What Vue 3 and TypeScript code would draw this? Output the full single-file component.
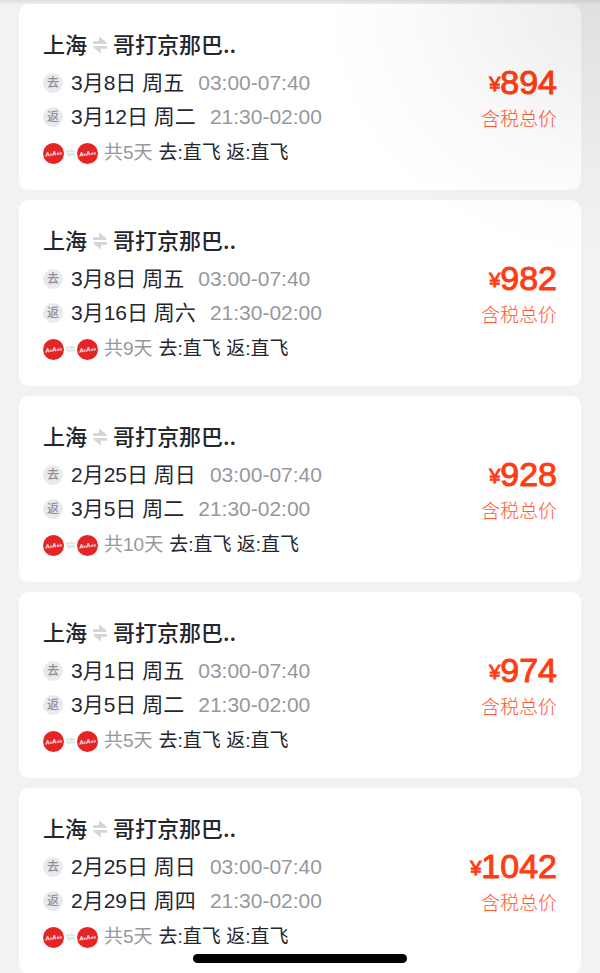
<script setup lang="ts">
interface Leg {
  tag: string
  date: string
  time: string
}

interface Fare {
  id: number
  legs: Leg[]
  days: number
  price: number
}

const outTime = '03:00-07:40'
const backTime = '21:30-02:00'

function fare(id: number, out: string, back: string, days: number, price: number): Fare {
  return {
    id,
    legs: [
      { tag: '去', date: out, time: outTime },
      { tag: '返', date: back, time: backTime },
    ],
    days,
    price,
  }
}

const fares: Fare[] = [
  fare(1, '3月8日 周五', '3月12日 周二', 5, 894),
  fare(2, '3月8日 周五', '3月16日 周六', 9, 982),
  fare(3, '2月25日 周日', '3月5日 周二', 10, 928),
  fare(4, '3月1日 周五', '3月5日 周二', 5, 974),
  fare(5, '2月25日 周日', '2月29日 周四', 5, 1042),
]
</script>

<template>
  <main class="page">
    <article v-for="item in fares" :key="item.id" class="card">
      <div class="info">
        <h2 class="route">
          <span>上海</span>
          <svg class="swap" viewBox="0 0 14 18" aria-hidden="true">
            <path d="M0 5.2H6V0.5L13.5 6.2V8H0Z" />
            <path d="M14 12.8H8V17.5L0.5 11.8V10H14Z" />
          </svg>
          <span>哥打京那巴..</span>
        </h2>
        <div v-for="leg in item.legs" :key="leg.tag" class="leg">
          <span class="tag">{{ leg.tag }}</span>
          <span class="date">{{ leg.date }}</span>
          <span class="time">{{ leg.time }}</span>
        </div>
        <div class="summary">
          <span class="carriers">
            <svg class="logo" viewBox="0 0 21 21" aria-hidden="true">
              <circle cx="10.5" cy="10.5" r="10.5" />
              <text x="10.5" y="12.5" text-anchor="middle" transform="rotate(-8 10.5 10.5)"><tspan class="cap">A</tspan>ir<tspan class="cap">A</tspan>sia</text>
            </svg>
            <svg class="link" viewBox="0 0 9 8" aria-hidden="true">
              <path d="M0 1.5H5V0L9 2.5V3.5H0Z" />
              <path d="M9 6.5H4V8L0 5.5V4.5H9Z" />
            </svg>
            <svg class="logo" viewBox="0 0 21 21" aria-hidden="true">
              <circle cx="10.5" cy="10.5" r="10.5" />
              <text x="10.5" y="12.5" text-anchor="middle" transform="rotate(-8 10.5 10.5)"><tspan class="cap">A</tspan>ir<tspan class="cap">A</tspan>sia</text>
            </svg>
          </span>
          <span class="days">共{{ item.days }}天</span>
          <span>去:直飞 返:直飞</span>
        </div>
      </div>
      <div class="cost">
        <div class="price"><span class="yen">¥</span>{{ item.price }}</div>
        <div class="note">含税总价</div>
      </div>
    </article>
    <div class="shade"></div>
    <div class="home-bar"></div>
  </main>
</template>

<style>
body {
  margin: 0;
  background: #f1f2f4;
}
</style>

<style scoped>
.page {
  position: relative;
  box-sizing: border-box;
  height: 100vh;
  overflow: hidden;
  display: flex;
  flex-direction: column;
  gap: 10px;
  padding: 4px 19px 0;
  background: #f1f2f4;
  color: #25262d;
  font-family: "Liberation Sans", "Noto Sans CJK SC", sans-serif;
}

.card {
  flex: none;
  box-sizing: border-box;
  display: flex;
  justify-content: space-between;
  padding: 24px 24px 18px;
  border-radius: 10px;
  background: #fff;
}

.route {
  display: flex;
  align-items: center;
  margin: 0 0 8px;
  height: 30px;
  font-family: "Noto Sans CJK SC", sans-serif;
  font-size: 22px;
  line-height: 30px;
  font-weight: 500;
  white-space: nowrap;
}

.swap {
  width: 14px;
  height: 18px;
  margin: 4px 6px 0;
  fill: #d4d5d9;
}

.leg {
  display: flex;
  align-items: center;
  height: 34px;
  font-size: 21px;
  line-height: 34px;
  white-space: nowrap;
}

.tag {
  width: 20px;
  height: 20px;
  margin-right: 8px;
  border-radius: 50%;
  background: #e9eaee;
  color: #8f9197;
  font-size: 12px;
  font-weight: 500;
  line-height: 20px;
  text-align: center;
}

.time {
  margin-left: 14px;
  color: #97989d;
}

.summary {
  display: flex;
  align-items: center;
  gap: 6px;
  height: 38px;
  font-size: 19px;
  line-height: 38px;
  white-space: nowrap;
}

.carriers {
  display: flex;
  align-items: center;
  gap: 2px;
}

.logo {
  width: 21px;
  height: 21px;
  fill: #e32526;
}

.logo text {
  fill: #fff;
  font-family: "Liberation Sans", sans-serif;
  font-size: 4px;
  font-style: italic;
  font-weight: 700;
}

.logo .cap {
  font-size: 6px;
}

.link {
  width: 9px;
  height: 8px;
  fill: #d9e8dc;
}

.days {
  color: #97989d;
}

.cost {
  padding-top: 34px;
  text-align: right;
  white-space: nowrap;
}

.price {
  height: 41px;
  color: #ff3d13;
  font-size: 34px;
  line-height: 40px;
  -webkit-text-stroke: 1px #ff3d13;
}

.yen {
  font-size: 20px;
  line-height: 20px;
  vertical-align: 3px;
}

.note {
  height: 34px;
  color: #ff5733;
  font-size: 19px;
  font-weight: 300;
  line-height: 34px;
}

.shade {
  position: absolute;
  inset: 0;
  pointer-events: none;
  background:
    linear-gradient(rgba(0, 0, 0, 0.08), rgba(0, 0, 0, 0) 5px),
    radial-gradient(ellipse 280px 260px at 100% 0, rgba(0, 0, 0, 0.08), rgba(0, 0, 0, 0.02) 65%, rgba(0, 0, 0, 0));
}

.home-bar {
  position: absolute;
  bottom: 10px;
  left: 50%;
  width: 214px;
  height: 9px;
  margin-left: -107px;
  border-radius: 5px;
  background: #000;
}
</style>
